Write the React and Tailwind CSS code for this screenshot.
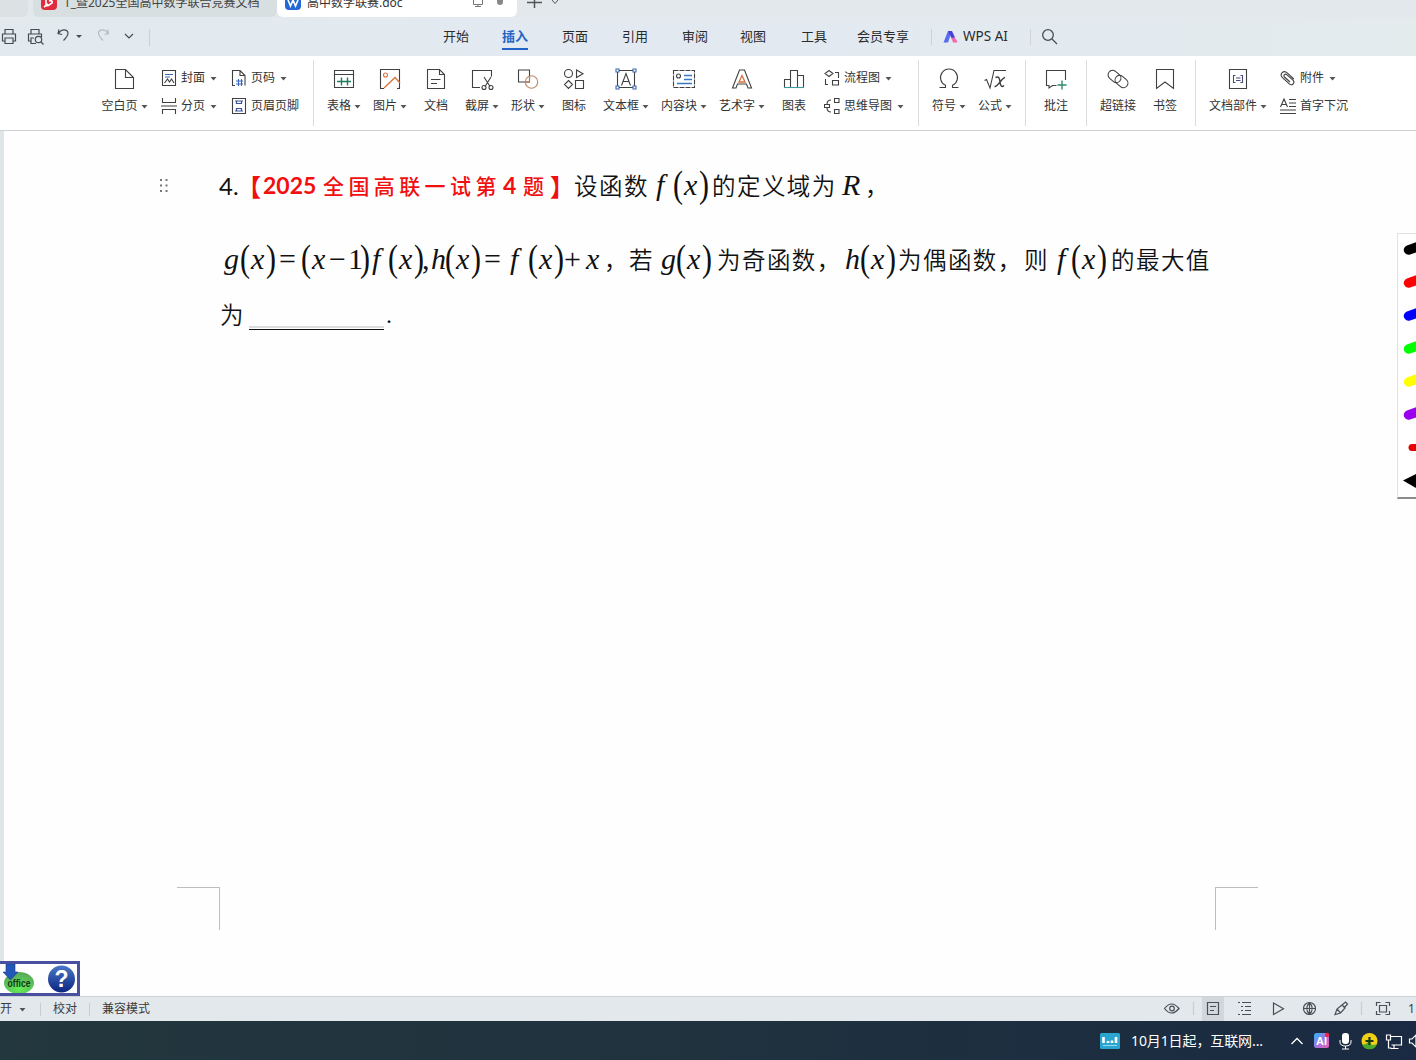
import React from 'react';

const UI_FONT = "font-['Noto_Sans','Noto_Sans_CJK_SC',sans-serif]";

const Caret = () => (
  <svg width="7" height="5" viewBox="0 0 7 5" className="shrink-0">
    <path d="M0.5 1h6L3.5 4.500z" fill="#555" />
  </svg>
);

const Icon = ({ size = 24, children }) => (
  <svg
    width={size}
    height={size}
    viewBox={`0 0 ${size} ${size}`}
    fill="none"
    stroke="#404040"
    strokeWidth="1.1"
    className="shrink-0"
  >
    {children}
  </svg>
);

// Large ribbon icons, 24px
const icons = {
  blank: <path d="M2.500 2.500h10l8 8v11h-18zM12.500 2.500v8h8" />,
  table: (
    <>
      <path d="M2.500 3.500h19v17h-19zM2.500 7.500h19" />
      <path d="M5 14.500h14M9.500 10.500v8M15.500 10.500v8" stroke="#1f7d5c" strokeWidth="1.4" />
    </>
  ),
  picture: (
    <>
      <path d="M6 21.500H2.500v-19h19v19H19" />
      <circle cx="7.500" cy="8" r="2" stroke="#d9703a" />
      <path d="M6 21l11-10.500 5 5.500" stroke="#d9703a" strokeWidth="1.300" />
    </>
  ),
  doc: <path d="M3.500 2.500h12l5 5v14h-17zM15.500 2.500v5h5M7 12.500h9.500M7 16.500h6" />,
  shot: (
    <>
      <path d="M10 20.500H2.500v-17h19v6" />
      <path d="M14 10l6 9.500M21 10l-6 9.500" />
      <circle cx="14" cy="20.500" r="2" />
      <circle cx="21" cy="20.500" r="2" />
    </>
  ),
  shape: (
    <>
      <path d="M2.500 3h11v12h-11z" />
      <circle cx="15.500" cy="15" r="6.200" stroke="#b98a6a" />
      <path d="M9.500 15h4V9" stroke="#d9703a" />
    </>
  ),
  marks: (
    <>
      <circle cx="6.500" cy="6.500" r="4" />
      <path d="M14.500 3v7.500l6.500-3.700zM6.500 13.500l4 4-4 4-4-4zM13.500 13.500h8v8h-8z" />
    </>
  ),
  textbox: (
    <>
      <path d="M3.500 5v14M20.500 5v14M5 3.500h14M5 20.500h14" />
      <path d="M7.500 18.500L12 6.500l4.500 12M9 14.500h6" />
      <path d="M2 2h3v3H2zM19 2h3v3h-3zM2 19h3v3H2zM19 19h3v3h-3z" fill="#fff" stroke="#3a66ad" />
    </>
  ),
  block: (
    <>
      <path d="M1.500 3.500h21v17h-21z" strokeDasharray="5 1" />
      <path d="M12 8.500h8M12 12.500h8M5 16.500h15" stroke="#3a78c2" strokeWidth="1.400" />
      <circle cx="6.500" cy="9" r="2" />
    </>
  ),
  art: (
    <>
      <path d="M2.500 21L9.500 3h5l7 18h-3.500l-1.500-4h-9L6 21z" />
      <path d="M12 8.500l3 6.500H9z" stroke="#d9703a" strokeWidth="1.300" />
    </>
  ),
  chart: (
    <>
      <path d="M2.500 20.500v-8h6M8.500 20.500v-17h7v17M15.500 8.500h6v12" />
      <path d="M2 20.500h20" stroke="#3f9b9b" />
    </>
  ),
  omega: <path d="M2.500 20.500h6v-2.200a8.500 8.500 0 1 1 7 0v2.200h6" />,
  formula: (
    <>
      <path d="M1.500 13.500l2-1 3.500 8.500L11 3.500h12" />
      <path d="M12.500 10.500c3-1.500 4 0 4.500 4.500s2 5.500 4 3.500M22 10.500c-3 0-7 9.500-10.500 9" strokeWidth="1.400" />
    </>
  ),
  comment: (
    <>
      <path d="M21.500 13V3.500h-19v15H5v2.500l3.500-2.500h4" />
      <path d="M13.500 18h9M18 13.500v9" stroke="#2f8a6e" strokeWidth="1.400" />
    </>
  ),
  link: (
    <>
      <rect x="1.500" y="5" width="14" height="9" rx="4.500" transform="rotate(40 8.500 9.500)" />
      <rect x="8.500" y="10" width="14" height="9" rx="4.500" transform="rotate(40 15.500 14.500)" />
    </>
  ),
  bookmark: <path d="M3.500 2.500h17v19L12 15l-8.500 6.500z" />,
  parts: (
    <>
      <path d="M3.500 2.500h17v19h-17z" />
      <path d="M9.500 8.500h-2v7h2M14.500 8.500h2v7h-2M10 11h4.500M10 13.500h4.500" stroke="#4a4a80" />
    </>
  ),
};

// Small ribbon icons, 16px
const smallIcons = {
  cover: (
    <>
      <path d="M1.500 .5h13v15h-13z" />
      <path d="M4 4.500h8M4 7h5" stroke="#3a66ad" />
      <path d="M3.500 13l3-4 2 3 2-3 2.500 4" />
    </>
  ),
  pageBreak: <path d="M1.500 0v4.500h13V0M0 8h16M1.500 16v-4.500h13V16" />,
  pageNo: (
    <>
      <path d="M4 15.500H1.500V.5H9l5 5v10M9 .5v5h5" />
      <path d="M5 11h7M5 14h7M7.500 9v7M10.500 9v7" stroke="#3a66c2" />
    </>
  ),
  headerFooter: (
    <>
      <path d="M1.500 .5h13v15h-13z" />
      <path d="M4 3h8M4 13h8M5.500 3v2.500h5V3M5.500 13v-2.500h5V13" stroke="#3a52a2" strokeWidth="1.200" />
    </>
  ),
  flow: <path d="M5 .5l4 3-4 3-4-3zM11 2.500h3.500V8M1.500 9v5.500H4M8.500 10.500h6v4.500h-6z" />,
  mind: <path d="M.5 6.500h5v3h-5zM3 6.500Q3 2 7 2M3 9.500Q3 14 7 14M10.500 .5h4.500v4h-4.500zM10.500 11.500h4.500v4h-4.500z" />,
  clip: <path d="M13.800 9L7.500 3.200C3.500-.5-1 4 2.500 7.700l6.500 6c3 2.500 6.500-.5 4-3.500L7 4.800C5 3 3 5.500 4.500 7l5.500 5" />,
  dropCap: <path d="M.5 9L4 1l3.500 8M2 6.500h4M9 1.500h7M9 5h7M9 8.500h7M0 12h16M0 15.500h16" />,
};

const BigItem = ({ icon, label, caret, className = 'w-[46px]' }) => (
  <div className={`flex flex-col items-center shrink-0 pt-[11px] ${className}`}>
    <Icon>{icons[icon]}</Icon>
    <div className="flex items-center gap-[3px] h-[18px] mt-[6px] whitespace-nowrap">
      <span>{label}</span>
      {caret && <Caret />}
    </div>
  </div>
);

const SmallItem = ({ icon, label, caret }) => (
  <div className="flex items-center h-[18px] whitespace-nowrap">
    <Icon size={16}>{smallIcons[icon]}</Icon>
    <span className="ml-[4px] mr-[5px]">{label}</span>
    {caret && <Caret />}
  </div>
);

const SmallColumn = ({ children, className }) => (
  <div className={`flex flex-col gap-[10px] pt-[13px] shrink-0 ${className}`}>{children}</div>
);

const Divider = () => <div className="w-px h-[66px] mt-[4px] mr-[7px] bg-[#dcdcdc] shrink-0" />;

const TabBar = () => (
  <div className="flex h-[17px] overflow-hidden bg-[#e2e8ec] text-[12px] text-[#444]">
    <div className="w-[28px] bg-[#dce2e4] rounded-br-md shrink-0" />
    <div className="ml-[5px] w-[244px] flex bg-[#d8dfe1] rounded-b-md shrink-0">
      <div className="ml-[8px] w-[16px] h-[10px] bg-[#e02c3c] rounded-b-sm flex justify-center">
        <svg width="12" height="9" viewBox="0 0 12 9" fill="none" stroke="#fff" strokeWidth="1.600">
          <path d="M3 0v4q0 3 3 1l3-2q1-3-3-2M1 7l4-3" />
        </svg>
      </div>
      <span className="ml-[7px] -mt-[6px] h-[18px] leading-[18px] w-[199px] overflow-hidden whitespace-nowrap">
        T_暨2025全国高中数学联合竞赛文档
      </span>
    </div>
    <div className="w-[240px] flex bg-white rounded-b-md shrink-0">
      <div className="ml-[8px] w-[16px] h-[10px] bg-[#2468d8] rounded-b-sm flex justify-center">
        <svg width="12" height="8" viewBox="0 0 12 8" fill="none" stroke="#fff" strokeWidth="1.600">
          <path d="M1 0l2.500 6L6 0l2.500 6L11 0" />
        </svg>
      </div>
      <span className="ml-[6px] -mt-[6px] h-[18px] leading-[18px] w-[165px] whitespace-nowrap text-[#333]">
        高中数学联赛.doc
      </span>
      <svg width="12" height="8" viewBox="0 0 12 8" fill="none" stroke="#777">
        <path d="M1.500 0v4.500h9V0M6 4.500v2M3 6.500h6" />
      </svg>
      <div className="ml-[13px] w-[6px] h-[5px] rounded-b-full bg-[#888]" />
    </div>
    <svg width="36" height="10" viewBox="0 0 36 10" fill="none" stroke="#555" className="ml-[10px]">
      <path d="M0 2.500h15M7.500 0v8" strokeWidth="1.500" />
      <path d="M25 0l3 3.500 3-3.500" />
    </svg>
  </div>
);

const MenuTab = ({ label, active, className }) => (
  <div className={`shrink-0 h-[39px] pt-[9px] ${className}`}>
    <span
      className={`inline-block h-[24px] leading-[20px] whitespace-nowrap ${
        active ? 'text-[#2464c8] font-semibold border-b-2 border-[#2464c8]' : ''
      }`}
    >
      {label}
    </span>
  </div>
);

const MenuBar = () => (
  <div className="flex h-[39px] bg-linear-to-r from-[#e3eaee] via-[#e2e9f1] to-[#e4ebed] text-[13px] text-[#2b2b2b]">
    <svg width="160" height="39" viewBox="0 0 160 39" fill="none" stroke="#454c52" strokeWidth="1.200" className="shrink-0">
      <path d="M5 17v-4.500h8V17M5 24H2.500v-7h13v7H13M5 21h8v5.500H5z" />
      <path d="M31 17v-4.500h8V17M31 24h-2.500v-7h13v3M36 26.500h-5V21h3" />
      <circle cx="38.500" cy="22.500" r="3.200" />
      <path d="M41 25l2.500 2.500" />
      <path d="M59 12.500l-1 4 4 1M58.500 16.500c3-5 9-4.500 9.500-.5 0 3-2 5-4.500 7.500" />
      <path d="M76 18h6L79 21z" fill="#454c52" stroke="none" />
      <path d="M107.500 12.500l1 4-4 1M108 16.500c-3-5-9-4.500-9.500-.5 0 3 2 5 4.500 7.500" stroke="#b5bcc2" />
      <path d="M125 17l4 4 4-4" />
      <path d="M149.500 12v17" stroke="#cdd3d8" />
    </svg>
    <MenuTab label="开始" className="ml-[283px] w-[59px]" />
    <MenuTab label="插入" active className="w-[60px]" />
    <MenuTab label="页面" className="w-[60px]" />
    <MenuTab label="引用" className="w-[60px]" />
    <MenuTab label="审阅" className="w-[58px]" />
    <MenuTab label="视图" className="w-[61px]" />
    <MenuTab label="工具" className="w-[56px]" />
    <MenuTab label="会员专享" className="w-[69px]" />
    <div className="flex items-center h-[39px] pl-[5px]">
      <div className="w-px h-[16px] bg-[#cdd3d8]" />
      <svg width="16" height="14" viewBox="0 0 16 14" className="ml-[11px]">
        <path d="M0.500 12.500L5 1h4L5 12.500z" fill="#5a6cf0" />
        <path d="M5 1h4l3 6.500-2.500 2.500z" fill="#4a3fd8" />
        <path d="M8.500 8.500c2-2 4.500-1 6 4H10z" fill="#ee6cae" />
      </svg>
      <span className="ml-[4px] w-[47px] whitespace-nowrap text-[13.500px]">WPS AI</span>
      <div className="ml-[20px] w-px h-[16px] bg-[#cdd3d8]" />
      <svg width="18" height="18" viewBox="0 0 18 18" fill="none" stroke="#454c52" strokeWidth="1.300" className="ml-[10px]">
        <circle cx="7" cy="7" r="5.300" />
        <path d="M11 11l5 5" />
      </svg>
    </div>
  </div>
);

const Ribbon = () => (
  <div className="flex h-[75px] pl-[95px] bg-white border-b border-[#cfd2d4] text-[12px] text-[#333] shrink-0">
    <BigItem icon="blank" label="空白页" caret className="w-[59px]" />
    <SmallColumn className="ml-[7px] w-[70px]">
      <SmallItem icon="cover" label="封面" caret />
      <SmallItem icon="pageBreak" label="分页" caret />
    </SmallColumn>
    <SmallColumn className="w-[82px]">
      <SmallItem icon="pageNo" label="页码" caret />
      <SmallItem icon="headerFooter" label="页眉页脚" />
    </SmallColumn>
    <Divider />
    <BigItem icon="table" label="表格" caret />
    <BigItem icon="picture" label="图片" caret />
    <BigItem icon="doc" label="文档" />
    <BigItem icon="shot" label="截屏" caret />
    <BigItem icon="shape" label="形状" caret />
    <BigItem icon="marks" label="图标" />
    <BigItem icon="textbox" label="文本框" caret className="w-[58px]" />
    <BigItem icon="block" label="内容块" caret className="w-[58px]" />
    <BigItem icon="art" label="艺术字" caret className="w-[58px]" />
    <BigItem icon="chart" label="图表" />
    <SmallColumn className="ml-[7px] w-[94px]">
      <SmallItem icon="flow" label="流程图" caret />
      <SmallItem icon="mind" label="思维导图" caret />
    </SmallColumn>
    <Divider />
    <BigItem icon="omega" label="符号" caret />
    <BigItem icon="formula" label="公式" caret />
    <div className="w-[7px] shrink-0" />
    <Divider />
    <BigItem icon="comment" label="批注" />
    <div className="w-[7px] shrink-0" />
    <Divider />
    <BigItem icon="link" label="超链接" className="w-[48px]" />
    <BigItem icon="bookmark" label="书签" />
    <div className="w-[7px] shrink-0" />
    <Divider />
    <BigItem icon="parts" label="文档部件" caret className="w-[70px]" />
    <SmallColumn className="ml-[7px]">
      <SmallItem icon="clip" label="附件" caret />
      <SmallItem icon="dropCap" label="首字下沉" />
    </SmallColumn>
  </div>
);

// Formula pieces: M is an italic variable, U an upright sign, P a tall bracket
const M = ({ w, children }) => <span className={`shrink-0 italic ${w}`}>{children}</span>;
const U = ({ w, children }) => <span className={`shrink-0 ${w}`}>{children}</span>;
const P = ({ w, children }) => (
  <span className={`shrink-0 inline-block origin-[50%_56%] scale-y-[1.25] ${w}`}>{children}</span>
);

const FnOfX = ({ name, nameWidth }) => (
  <>
    <M w={nameWidth}>{name}</M>
    <P w="w-[11px]">(</P>
    <M w="w-[15px]">x</M>
    <P w="w-[10px]">)</P>
  </>
);

const Formula = ({ className, children }) => (
  <div className={`flex shrink-0 text-[30px] leading-[36px] h-[36px] -mt-[2px] whitespace-pre font-['Liberation_Serif',serif] ${className}`}>
    {children}
  </div>
);

const Zh = ({ className = '', children }) => (
  <span className={`shrink-0 whitespace-nowrap text-[23.500px] tracking-[1.450px] font-[350] ${className}`}>{children}</span>
);

const CornerMarks = () => (
  <div className="flex justify-between ml-[177px] w-[1081px] h-[43px]">
    <div className="w-[43px] border-t border-r border-[#bdbdbd]" />
    <div className="w-[43px] border-t border-l border-[#bdbdbd]" />
  </div>
);

const penColors = ['#000000', '#ff0000', '#0000ff', '#00ff00', '#ffff00', '#9900ee'];

const PenPalette = () => (
  <div className="absolute right-0 top-[102px] w-[19px] h-[266px] bg-white border-l border-t border-[#e2e2e2] border-b-2 border-b-[#8c8c8c] overflow-hidden">
    <svg width="18" height="263" viewBox="0 0 18 263">
      {penColors.map((color, i) => (
        <path
          key={color}
          d={`M10.500 ${16 + i * 33}L22 ${12 + i * 33}`}
          stroke={color}
          strokeWidth="9.500"
          strokeLinecap="round"
        />
      ))}
      <path d="M14 213.500h8" stroke="#e80000" strokeWidth="7" strokeLinecap="round" />
      <path d="M5 246.500l14-7v15z" fill="#000" />
    </svg>
  </div>
);

const OfficeWidget = () => (
  <div className="absolute left-0 bottom-0 w-[80px] h-[35px] bg-white border-[3px] border-l-0 border-[#4950a0]">
    <svg width="77" height="29" viewBox="0 0 77 29">
      <defs>
        <radialGradient id="green" cx="50%" cy="75%" r="70%">
          <stop offset="0" stopColor="#63ef55" />
          <stop offset="1" stopColor="#58a95a" />
        </radialGradient>
        <linearGradient id="blue" x1="0" y1="0" x2="0" y2="1">
          <stop offset="0" stopColor="#4a78c8" />
          <stop offset="1" stopColor="#0c2480" />
        </linearGradient>
      </defs>
      <ellipse cx="19" cy="19" rx="15" ry="11" fill="url(#green)" />
      <path d="M6 0h9v8h3l-7.500 8L3 8h3z" fill="#2458b8" stroke="#173a88" strokeWidth="0.600" />
      <text x="19" y="23" textAnchor="middle" fontSize="10" fontFamily="Liberation Sans" fontWeight="bold" textLength="23" lengthAdjust="spacingAndGlyphs" fill="#123a18">
        office
      </text>
      <circle cx="61.500" cy="15" r="13.500" fill="url(#blue)" />
      <text x="61.500" y="23" textAnchor="middle" fontSize="23" fontFamily="Liberation Sans" fontWeight="bold" fill="#fff">
        ?
      </text>
    </svg>
  </div>
);

const Document = () => (
  <div className="relative h-[865px] bg-[#fefefe] border-l-4 border-[#e0e6e8] text-[#111] overflow-hidden shrink-0 font-['Noto_Sans_CJK_SC',sans-serif]">
    <div className="-ml-[4px]">
      <div className="flex items-center h-[36px] mt-[37px]">
        <svg width="10" height="16" viewBox="0 0 10 16" fill="#777" className="ml-[159px] shrink-0">
          <path d="M1 1h2v2H1zM6.500 1h2v2h-2zM1 6.500h2v2H1zM6.500 6.500h2v2h-2zM1 12h2v2H1zM6.500 12h2v2h-2z" />
        </svg>
        <span className="ml-[50px] w-[18px] text-[24px] font-['Lato',sans-serif]">4.</span>
        <div className="flex items-center w-[337px] -mt-[1px] shrink-0 whitespace-nowrap text-[#f01010] font-bold text-[21px]">
          <span className="w-[26px] text-[24px]">【</span>
          <span className="w-[60px] text-[23px] font-['Lato',sans-serif]">2025</span>
          <span className="w-[180px] tracking-[4.400px] font-medium">全国高联一试第</span>
          <span className="w-[20px] text-[23px] font-['Lato',sans-serif]">4</span>
          <span className="w-[27px] font-medium">题</span>
          <span className="text-[24px]">】</span>
        </div>
        <Zh className="w-[84px]">设函数</Zh>
        <Formula className="w-[54px]">
          <FnOfX name="f" nameWidth="w-[16px] -ml-[2px] mr-[1px]" />
        </Formula>
        <Zh className="w-[131px]">的定义域为</Zh>
        <Formula className="w-[22px]">
          <M w="w-[20px] -ml-[1px]">R</M>
        </Formula>
        <Zh>，</Zh>
      </div>

      <div className="flex items-center h-[36px] mt-[38px] ml-[224px]">
        <Formula className="w-[380px]">
          <FnOfX name="g" nameWidth="w-[16px]" />
          <U w="w-[25px] pl-[3px]">=</U>
          <P w="w-[11px]">(</P>
          <M w="w-[17px]">x</M>
          <U w="w-[19px]">−</U>
          <U w="w-[12px]">1</U>
          <P w="w-[13px]">)</P>
          <FnOfX name="f" nameWidth="w-[16px] -ml-[1px]" />
          <U w="w-[9px] -ml-[2px]">,</U>
          <FnOfX name="h" nameWidth="w-[14px]" />
          <U w="w-[30px] pl-[3px]">=</U>
          <FnOfX name="f" nameWidth="w-[18px] -ml-[1px]" />
          <U w="w-[22px]">+</U>
          <M w="w-[18px]">x</M>
        </Formula>
        <Zh className="w-[25px]">，</Zh>
        <Zh className="w-[32px]">若</Zh>
        <Formula className="w-[56px]">
          <FnOfX name="g" nameWidth="w-[15px]" />
        </Formula>
        <Zh className="w-[128px]">为奇函数，</Zh>
        <Formula className="w-[53px]">
          <FnOfX name="h" nameWidth="w-[15px]" />
        </Formula>
        <Zh className="w-[126px]">为偶函数，</Zh>
        <Zh className="w-[33px]">则</Zh>
        <Formula className="w-[54px]">
          <FnOfX name="f" nameWidth="w-[14px]" />
        </Formula>
        <Zh>的最大值</Zh>
      </div>

      <div className="flex items-center h-[36px] mt-[19px] ml-[220px]">
        <Zh className="w-[29px]">为</Zh>
        <div className="w-[135px] h-[30px] flex flex-col justify-end border-b border-[#111]">
          <div className="h-[2px] mb-[1px] bg-[#dcdcdc]" />
        </div>
        <span className="ml-[2px] text-[24px] leading-[24px] font-['Liberation_Serif',serif]">.</span>
      </div>

      <div className="mt-[554px]">
        <CornerMarks />
      </div>
    </div>
    <PenPalette />
  </div>
);

const StatusBar = () => (
  <div className="flex items-center h-[25px] border-t border-[#cdd2d4] bg-[#e2e8ec] text-[12px] text-[#3c3c3c] shrink-0">
    <span>开</span>
    <span className="ml-[7px] w-[21px] flex"><Caret /></span>
    <div className="w-px h-[13px] bg-[#c8cdd1]" />
    <span className="ml-[12px] w-[36px]">校对</span>
    <div className="w-px h-[13px] bg-[#c8cdd1]" />
    <span className="ml-[12px]">兼容模式</span>
    <div className="ml-auto w-[256px] h-[24px] flex items-center shrink-0">
      <svg width="256" height="24" viewBox="0 0 256 24" fill="none" stroke="#4a4f55" strokeWidth="1.200">
        <path d="M4.500 11.500q7-9 14.500 0q-7.500 9-14.500 0z" />
        <circle cx="12" cy="11.500" r="2.300" />
        <path d="M33.500 5v13M201.500 5v13" stroke="#c8cdd1" />
        <path d="M42 0h22v24H42z" fill="#d2d7db" stroke="none" />
        <path d="M47.500 5.500h11v12h-11zM50 9.500h6M50 13.500h4" />
        <path d="M78 5.500h2M82 5.500h9M81 9.500h2M85 9.500h6M81 13.500h2M85 13.500h6M78 17.500h2M82 17.500h9" />
        <path d="M113.500 6v11.500l10-5.700z" />
        <circle cx="149.500" cy="11.500" r="6" />
        <path d="M143.500 11.500h12M149.500 5.500v12M149.500 5.500q-5.500 6 0 12M149.500 5.500q5.500 6 0 12" />
        <path d="M182 8l3.500-3 2 2-3 3.500zM182 8l-5 4-2 5.500 5.500-1.500 4.500-5zM177 12l3.500 4" />
        <path d="M216.500 9V5.500h4M225.500 5.500h4V9M229.500 14v3.500h-4M220.500 17.500h-4V14M219.500 8.500h7v6.500h-7z" />
      </svg>
    </div>
    <span className="w-[6px] shrink-0 overflow-hidden mr-[2px] -ml-[8px]">1</span>
  </div>
);

const TaskBar = () => (
  <div className="flex items-center h-[39px] pl-[1100px] bg-linear-to-r from-[#23373e] via-[#1f323e] to-[#1a2a42] text-white shrink-0">
    <svg width="20" height="16" viewBox="0 0 20 16" className="shrink-0">
      <rect width="20" height="16" rx="1.500" fill="#29a5cf" />
      <path d="M3.500 4v6M8 8v2M12 7.500v2.500M16 4v6" stroke="#fff" strokeWidth="2.600" />
      <path d="M3 12.500h14" stroke="#8ddcf0" />
    </svg>
    <span className="ml-[11px] w-[160px] text-[14px] tracking-[-0.1px] whitespace-nowrap">10月1日起，互联网...</span>
    <svg width="125" height="20" viewBox="0 0 125 20" fill="none" className="shrink-0">
      <defs>
        <linearGradient id="ai" x1="0" y1="0" x2="1" y2="1">
          <stop offset="0" stopColor="#29b8f5" />
          <stop offset="0.500" stopColor="#9c78e8" />
          <stop offset="1" stopColor="#f05cae" />
        </linearGradient>
      </defs>
      <path d="M0.500 13L6 7.500l5.500 5.500" stroke="#fff" strokeWidth="1.300" />
      <rect x="23" y="2" width="15" height="15" rx="2.500" fill="url(#ai)" />
      <text x="30.500" y="14" textAnchor="middle" fontSize="11" fontWeight="bold" fontFamily="Liberation Sans" fill="#fff">
        AI
      </text>
      <circle cx="36" cy="4" r="2.200" fill="#f02844" />
      <rect x="51" y="2" width="7" height="11" rx="3" fill="#fff" />
      <path d="M49 9v2q0 4 5.500 4t5.500-4V9M54.500 15v3M51 18h7" stroke="#fff" />
      <circle cx="78.500" cy="10" r="8" fill="#f2cf16" />
      <path d="M71 13a8 8 0 0 0 15 0q-7 3-8-3-4 5-7 3z" fill="#4aa82c" />
      <path d="M78.500 6v8M74.500 10h8" stroke="#173a18" strokeWidth="2.200" />
      <path d="M99 5.500h11.500v8.500h-10M103 14v3M99.500 17.500h8M95.500 4h4v5h-4zM97.500 9v8h3" stroke="#fff" strokeWidth="1.200" />
      <path d="M118.500 8h2.500l4-4v12l-4-4h-2.500z" stroke="#fff" strokeWidth="1.200" />
    </svg>
  </div>
);

export default function App() {
  return (
    <div className={`relative flex flex-col w-[1416px] h-[1060px] overflow-hidden bg-white ${UI_FONT}`}>
      <TabBar />
      <MenuBar />
      <Ribbon />
      <div className="relative flex flex-col">
        <Document />
        <OfficeWidget />
      </div>
      <StatusBar />
      <TaskBar />
    </div>
  );
}
